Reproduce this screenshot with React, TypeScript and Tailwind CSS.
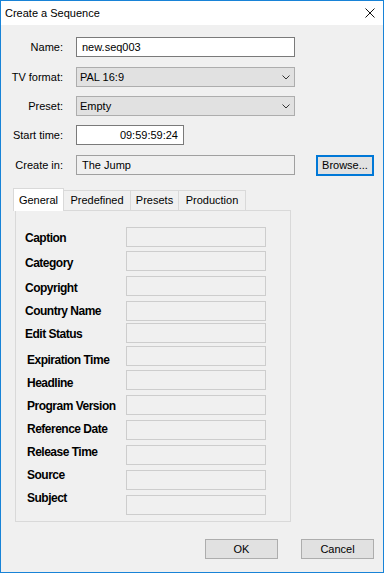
import React from 'react'

const font = { fontFamily: '"Liberation Sans", Arial, sans-serif' }

const fieldLabels = [
  { text: 'Caption', cls: 'mt-[20px]' },
  { text: 'Category', cls: 'mt-[11px]' },
  { text: 'Copyright', cls: 'mt-[11px]' },
  { text: 'Country Name', cls: 'mt-[9px]' },
  { text: 'Edit Status', cls: 'mt-[9px]' },
  { text: 'Expiration Time', cls: 'mt-[12px] pl-[2px]' },
  { text: 'Headline', cls: 'mt-[9px] pl-[2px]' },
  { text: 'Program Version', cls: 'mt-[9px] pl-[2px]' },
  { text: 'Reference Date', cls: 'mt-[9px] pl-[2px]' },
  { text: 'Release Time', cls: 'mt-[9px] pl-[2px]' },
  { text: 'Source', cls: 'mt-[9px] pl-[2px]' },
  { text: 'Subject', cls: 'mt-[9px] pl-[2px]' },
]

// vertical spacing of the value boxes does not follow the labels exactly
const boxGaps = [
  'mt-[16px]', 'mt-[4px]', 'mt-[5px]', 'mt-[5px]', 'mt-[2px]', 'mt-[3px]',
  'mt-[4px]', 'mt-[5px]', 'mt-[5px]', 'mt-[5px]', 'mt-[5px]', 'mt-[5px]',
]

function Chevron() {
  return (
    <svg width="8" height="5" viewBox="0 0 8 5" className="shrink-0">
      <path d="M0.5 0.5 L4 4 L7.5 0.5" fill="none" stroke="#333" strokeWidth="1" />
    </svg>
  )
}

function FormRow({ label, children, className = '' }: { label: string; children: React.ReactNode; className?: string }) {
  return (
    <div className={`flex items-center h-[20px] ${className}`}>
      <div className="w-[62px] text-right mr-[13px] whitespace-nowrap">{label}</div>
      {children}
    </div>
  )
}

function Select({ value }: { value: string }) {
  return (
    <div className="w-[219px] h-[20px] flex items-center justify-between bg-[#e1e1e1] border border-[#adadad] pl-[3px] pr-[4px]">
      <span>{value}</span>
      <Chevron />
    </div>
  )
}

export default function App() {
  return (
    <div className="w-[386px] h-[574px] bg-white text-[11px] text-black" style={font}>
      <div className="w-[384px] h-[573px] border border-[#1883d7] bg-[#f0f0f0] flex flex-col">
        {/* Title bar */}
        <div className="h-[24px] bg-white flex items-center justify-between pl-[4px] pr-[8px]">
          <span className="text-[11px]">Create a Sequence</span>
          <svg width="10" height="10" viewBox="0 0 10 10">
            <path d="M0.5 0.5 L9.5 9.5 M9.5 0.5 L0.5 9.5" stroke="#111" strokeWidth="1" />
          </svg>
        </div>

        {/* Top form */}
        <div className="flex flex-col gap-[9px] pt-[12px]">
          <FormRow label="Name:" className="mb-px">
            <div className="w-[219px] h-[20px] flex items-center bg-white border border-[#7a7a7a] pl-[5px]">
              new.seq003
            </div>
          </FormRow>
          <FormRow label="TV format:">
            <Select value="PAL 16:9" />
          </FormRow>
          <FormRow label="Preset:">
            <Select value="Empty" />
          </FormRow>
          <FormRow label="Start time:">
            <div className="w-[108px] h-[20px] flex items-center justify-end bg-white border border-[#7a7a7a] pr-[5px]">
              09:59:59:24
            </div>
          </FormRow>
          <FormRow label="Create in:" className="mt-px">
            <div className="w-[219px] h-[20px] flex items-center bg-[#f0f0f0] border border-[#a0a0a0] pl-[5px]">
              The Jump
            </div>
            <button className="ml-[21px] w-[58px] h-[21px] flex items-center justify-center bg-[#e1e1e1] border-2 border-[#0078d7]">
              Browse...
            </button>
          </FormRow>
        </div>

        {/* Tabs */}
        <div className="flex items-end ml-[12px] mt-[13px]">
          <div className="relative z-10 -mb-px h-[23px] w-[51px] bg-white border border-b-0 border-[#d9d9d9] flex items-center justify-center">
            General
          </div>
          <div className="h-[20px] w-[67px] border border-l-0 border-b-0 border-[#d9d9d9] flex items-center justify-center">
            Predefined
          </div>
          <div className="h-[20px] w-[48px] border border-l-0 border-b-0 border-[#d9d9d9] flex items-center justify-center">
            Presets
          </div>
          <div className="h-[20px] w-[67px] border border-l-0 border-b-0 border-[#d9d9d9] flex items-center justify-center">
            Production
          </div>
        </div>

        {/* Tab panel */}
        <div className="ml-[14px] w-[276px] h-[312px] border border-[#d9d9d9] flex pl-[9px]">
          <div className="w-[101px] flex flex-col">
            {fieldLabels.map((l) => (
              <div
                key={l.text}
                className={`h-[14px] leading-[14px] text-[12px] font-bold tracking-[-0.5px] whitespace-nowrap ${l.cls}`}
              >
                {l.text}
              </div>
            ))}
          </div>
          <div className="w-[140px] flex flex-col">
            {boxGaps.map((g, i) => (
              <div key={i} className={`h-[20px] border border-[#cdcdcd] bg-[#f0f0f0] ${g}`} />
            ))}
          </div>
        </div>

        {/* Buttons */}
        <div className="flex justify-end gap-[23px] pr-[9px] mt-[17px]">
          <button className="w-[73px] h-[20px] bg-[#e1e1e1] border border-[#adadad]">OK</button>
          <button className="w-[73px] h-[20px] bg-[#e1e1e1] border border-[#adadad]">Cancel</button>
        </div>
      </div>
    </div>
  )
}
